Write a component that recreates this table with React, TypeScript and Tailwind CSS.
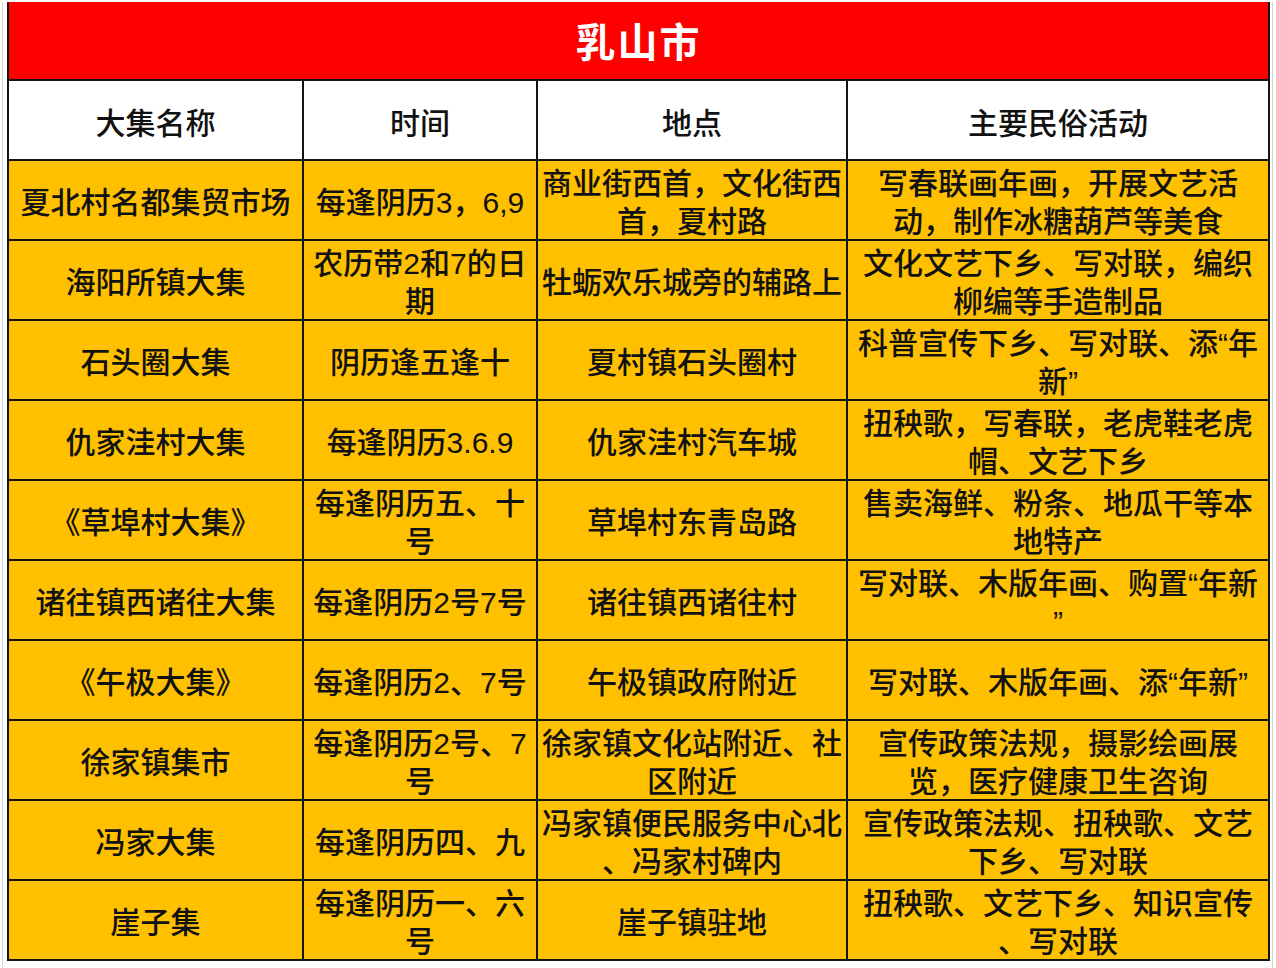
const rows: string[][][] = [
  [['夏北村名都集贸市场'], ['每逢阴历3，6,9'], ['商业街西首，文化街西', '首，夏村路'], ['写春联画年画，开展文艺活', '动，制作冰糖葫芦等美食']],
  [['海阳所镇大集'], ['农历带2和7的日', '期'], ['牡蛎欢乐城旁的辅路上'], ['文化文艺下乡、写对联，编织', '柳编等手造制品']],
  [['石头圈大集'], ['阴历逢五逢十'], ['夏村镇石头圈村'], ['科普宣传下乡、写对联、添“年', '新”']],
  [['仇家洼村大集'], ['每逢阴历3.6.9'], ['仇家洼村汽车城'], ['扭秧歌，写春联，老虎鞋老虎', '帽、文艺下乡']],
  [['《草埠村大集》'], ['每逢阴历五、十', '号'], ['草埠村东青岛路'], ['售卖海鲜、粉条、地瓜干等本', '地特产']],
  [['诸往镇西诸往大集'], ['每逢阴历2号7号'], ['诸往镇西诸往村'], ['写对联、木版年画、购置“年新', '”']],
  [['《午极大集》'], ['每逢阴历2、7号'], ['午极镇政府附近'], ['写对联、木版年画、添“年新”']],
  [['徐家镇集市'], ['每逢阴历2号、7', '号'], ['徐家镇文化站附近、社', '区附近'], ['宣传政策法规，摄影绘画展', '览，医疗健康卫生咨询']],
  [['冯家大集'], ['每逢阴历四、九'], ['冯家镇便民服务中心北', '、冯家村碑内'], ['宣传政策法规、扭秧歌、文艺', '下乡、写对联']],
  [['崖子集'], ['每逢阴历一、六', '号'], ['崖子镇驻地'], ['扭秧歌、文艺下乡、知识宣传', '、写对联']],
]

const headers = ['大集名称', '时间', '地点', '主要民俗活动']

function Cell({ lines, bg }: { lines: string[]; bg: string }) {
  return (
    <div className={`${bg} h-[78px] pt-[6px] flex flex-col items-center justify-center text-center text-[30px] leading-[38px] font-medium text-[#111] whitespace-nowrap overflow-hidden`}>
      {lines.map((l, i) => (
        <span key={i}>{l}</span>
      ))}
    </div>
  )
}

export default function App() {
  return (
    <div
      className="w-[1276px] h-[968px] bg-white flex pt-[2px]"
      style={{ fontFamily: '"Liberation Sans", "Noto Sans CJK SC", sans-serif' }}
    >
      <div className="w-[7px] flex justify-start pl-[2px]">
        <div className="w-px h-full bg-[#d4d4d4]" />
      </div>
      <div className="grid grid-cols-[293px_232px_308px_420px] gap-[2px] bg-[#141414] px-[2px] pb-[2px] h-fit">
        <div className="col-span-4 h-[77px] pt-[4px] bg-[#ff0000] flex items-center justify-center text-white text-[40px] font-bold tracking-[2px]">
          乳山市
        </div>
        {headers.map((h) => (
          <div key={h} className="h-[78px] pt-[6px] bg-white flex items-center justify-center text-[30px] font-medium text-[#111]">
            {h}
          </div>
        ))}
        {rows.map((r, i) =>
          r.map((c, j) => <Cell key={`${i}-${j}`} lines={c} bg="bg-[#ffc000]" />)
        )}
      </div>
      <div className="flex-1 flex justify-start pl-[2px]">
        <div className="w-px h-full bg-[#d4d4d4]" />
      </div>
    </div>
  )
}
